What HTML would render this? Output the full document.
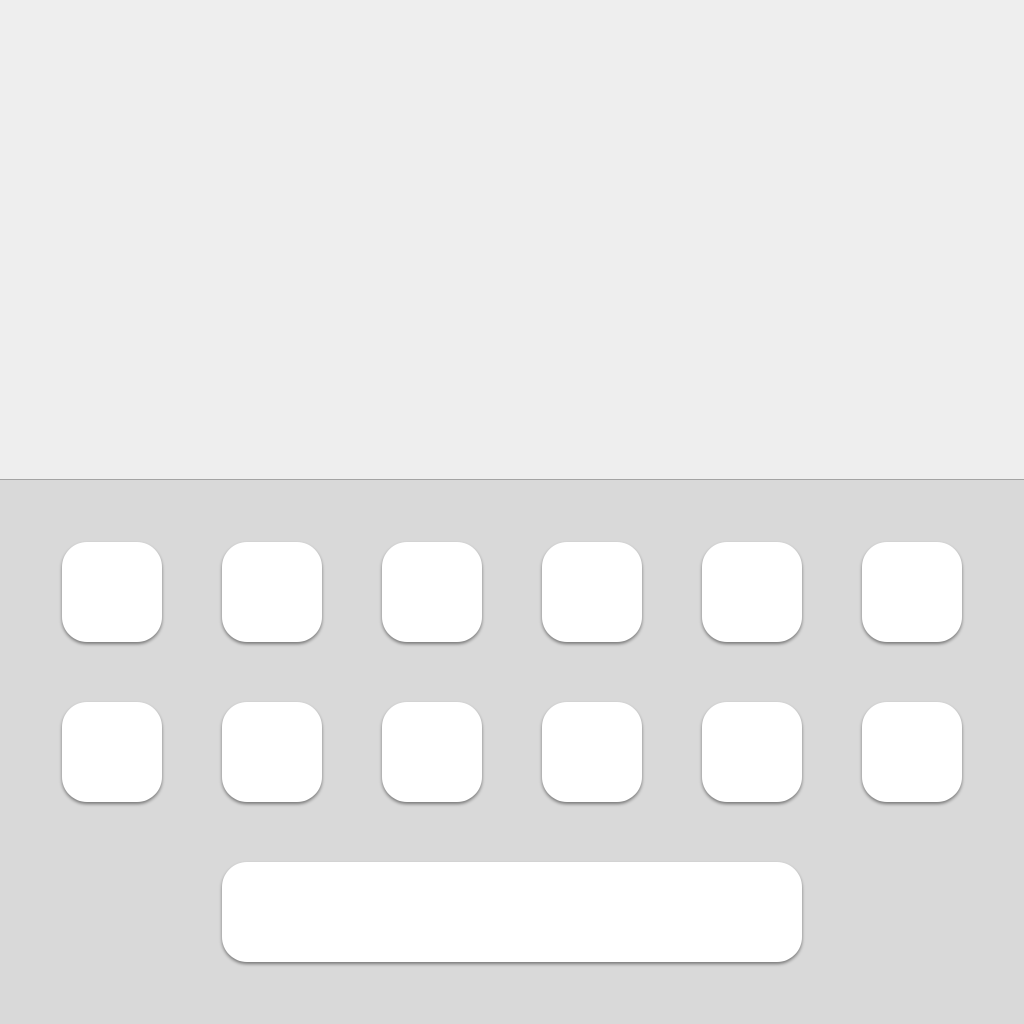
<!DOCTYPE html>
<html><head><style>
html,body{margin:0;padding:0;width:1024px;height:1024px;overflow:hidden;background:#eeeeee}
.kb{position:absolute;left:0;top:479px;width:1024px;height:545px;background:#d9d9d9;border-top:1px solid #a3a3a3;box-sizing:border-box}
.k{position:absolute;width:100px;height:100px;background:#fff;border-radius:25px;box-shadow:0 2px 3px rgba(0,0,0,0.45)}
</style></head><body>
<div class="kb"></div>
<div class="k" style="left:62px;top:542px"></div>
<div class="k" style="left:222px;top:542px"></div>
<div class="k" style="left:382px;top:542px"></div>
<div class="k" style="left:542px;top:542px"></div>
<div class="k" style="left:702px;top:542px"></div>
<div class="k" style="left:862px;top:542px"></div>
<div class="k" style="left:62px;top:702px"></div>
<div class="k" style="left:222px;top:702px"></div>
<div class="k" style="left:382px;top:702px"></div>
<div class="k" style="left:542px;top:702px"></div>
<div class="k" style="left:702px;top:702px"></div>
<div class="k" style="left:862px;top:702px"></div>
<div class="k" style="left:222px;top:862px;width:580px"></div>
</body></html>
